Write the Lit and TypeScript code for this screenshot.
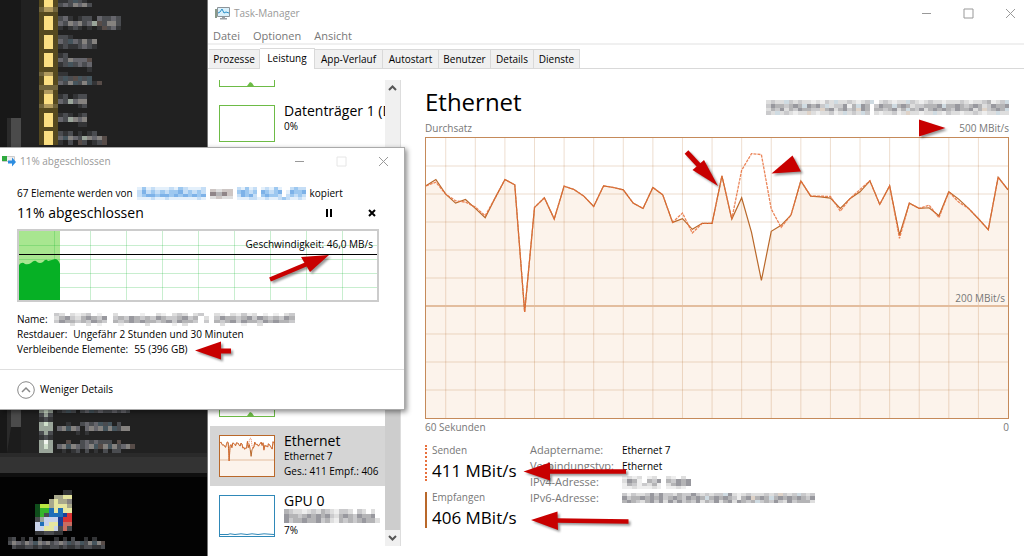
import { LitElement, html, svg, css } from "lit";
import { customElement } from "lit/decorators.js";

const PALETTE: Record<string, string> = {
  a: "#333436", b: "#4a4c50", c: "#66666c", d: "#85827f", e: "#45545c", f: "#574c48",
  y: "#fbdf82", m: "#b09a5e", n: "#55491f", k: "#70643c",
  g: "#9aa59a", h: "#d0e0cc", i: "#f0f4ee",
  A: "#eeeeee", B: "#dedede", C: "#cacacc", D: "#b4b4b6", E: "#98989e", F: "#cfdbe2", G: "#dfd3c8",
  L: "#e4f0fb", M: "#c5def6", N: "#9dc8f0", O: "#7db2e8", P: "#cdc6c4", Q: "#8f8588",
  1: "#0f4d1b", 2: "#35b52a", 3: "#b8e640", 4: "#1f6fb8", 5: "#1b3f96", 6: "#c9d3ea", 7: "#e6e6a0",
  8: "#d83434", 9: "#c86c60", 0: "#a8a88c",
};

function mosaic(rows: string[], width: number, height: number) {
  const cols = Math.max(...rows.map((r) => r.length));
  return html`<svg class="mosaic" aria-hidden="true" width=${width} height=${height}
    viewBox="0 0 ${cols} ${rows.length}" preserveAspectRatio="none" shape-rendering="crispEdges">
    ${rows.flatMap((row, y) => [...row].map((ch, x) => PALETTE[ch]
      ? svg`<rect x=${x} y=${y} width="1" height="1" fill=${PALETTE[ch]}></rect>` : null))}
  </svg>`;
}

const FOLDERS = [
  "nyynaabeba",
  "nyynbcbdcdb",
  "kmmk",
  "nnnn",
  "nyynbca.abb.cbbcb",
  "nyyncbdcdbcgfbddb",
  "nyyna.aba.a.afbca",
  "nnnn",
  "nyynbba",
  "nyyncbecbdbd",
  "nyynabaabcba",
  "nnnn",
  "nyynab",
  "nyyncbdcccf",
  "nyynabebcbc",
  "nnnn......a",
  "kmmnaa",
  "nyynbebfebe",
  "nyyncbdebdeaf",
  "kkkk",
  "nmmn",
  "nyynab.abb",
  "nyyncbgcdd",
  "kmmk....ab",
  "nnnn",
  "nyynaba.ab",
  "nyyncbgdcd",
  "nyyn....aa",
  "nnnn",
  "nyynbab.a.ab",
  "nyyncedcbgdcdf",
  "nyyna.b.fb.abf",
];
const FILES = [
  "ghg.abeb.bcebcbbcbcb",
  "bgb",
  "aba",
  "ghg...a..bcbcebe.b",
  "ggg.cdedc.cdcdedebdd",
  "bgb.....a.a",
  "aba",
  "gig...f..bcbcbbb.f",
  "ghg.cdedcbcdefdedbcdf",
  "ggg..a.ab.b.a.b.bb",
];
const SHORTCUT = [
  "......aa",
  "....0077",
  "...0700d",
  "13307770",
  "12247477",
  "12b44458",
  "bg666588",
  "64677599",
  "66776b9b",
  "aabbaa",
];
const SHORTCUT_LABEL = [
  "ab.a.b.b...a.a.b..a.a",
  "bdcbdcedcdbcdcebcebdedf",
  ".baabbabaabbabaababbaab",
];
const ADAPTER = [
  "BCBBFCBCBBABACBFBBCBABCF.BCBABBFCBABCBBABBBCBABBCDABCF",
  "CEDDCDEDFEDECFBCCEADFED.CEDDFDEDBCCDDDEFDDEDCDEDBCEDDE",
  "BDCEBDCEDDCCGDEBDECDGED.DDCDEBDFDCEBDEDEDCEDDEBDGCDEDF",
  "CBFBCBABBGBABBCABFBCBFC.BABBCABGBBABBFBACBBABBCBABBFBB",
];
const SOURCE = [
  "LNLMLLLMLNMLLLM",
  "MOMNMNMNNOMNMNM",
  "MNOONOONONONONO",
  "LLLMLLMLLLLLLML",
];
const PREPOSITION = ["PBPP", "QDQP", "BPBB"];
const TARGET = [
  "MLNLM.LMLNL..MNMM",
  "NONMN.ONMNO.LONNO",
  "MONOM.NONNM.MNMNM",
  "LLLMMLLMLLMNMLLML",
];
const FILE_NAME = [
  "CB.BABC.A..B....A..BA.BCB.BC..BA.BACAB.A.A.BC",
  "BDECBDEDCE.CDCEDCDCEDCCDECD.B.CEDDCDECEDCDCED",
  "CEDDCDCEDC.DCDEDEDDCDECEDDC.C.DCDECEDDCEDEDDC",
  "...B..B.A...A....B....A.B......B...A..B.......",
];
const IPV4 = ["ABAB.AB..BA.B", "BEDA.DCE.DCEDE", "ADCACBDA.BDEDE", "AABAAABA.AABA"];
const IPV6 = [
  "CACBBCECECCBDCCECBCBCCFEBABCBBBCBCGCBCFCBC",
  "ECDDEDEDECDEDCEDEDFDEDEDCADEGDEDFDEDEDEDCE",
  "DEDCBDECEBECECDCEBDCEBDEBEDCDFCDCECBECDDDB",
];
const GPU_NAME = ["DCBBABCBDCBACCB.CB.B", "EDDCDEDEDECBDEDCEDDE", "ECDDEDDECDBADCDCDEDDB"];

/* Throughput samples, measured downwards from the top of a 590 × 843 plot. */
const RECEIVE = [144, 125, 169, 196, 185, 212, 240, 181, 125, 141, 524, 209, 180, 244, 145, 155, 175, 206,
  144, 149, 156, 196, 212, 149, 171, 254, 243, 275, 257, 257, 114, 244, 180, 284, 429, 281, 263, 232, 129,
  175, 177, 181, 212, 182, 162, 129, 200, 144, 292, 196, 212, 210, 234, 162, 184, 212, 243, 276, 118, 156];
const SEND = RECEIVE.slice();
Object.entries({ 1: 133, 3: 189, 4: 193, 5: 208, 6: 234, 26: 226, 27: 286, 32: 97, 33: 47, 34: 50, 35: 214,
  36: 269, 40: 175, 41: 176, 42: 220, 44: 155, 48: 302, 51: 202, 52: 240, 54: 193 })
  .forEach(([i, v]) => (SEND[+i] = v));
const points = (d: number[]) => d.map((v, i) => `${i * 10},${v}`).join(" ");
const range = (n: number) => Array.from({ length: n }, (_, i) => i);

function throughput(mini = false) {
  return html`<svg class="plot" viewBox="0 0 590 843" preserveAspectRatio="none" aria-hidden="true">
    <polygon points="0,843 ${points(RECEIVE)} 590,843" fill="#fcf3eb"></polygon>
    ${mini ? null : svg`<g stroke="#a74f01" stroke-opacity=".19">
      ${range(19).map((i) => svg`<line x1=${20 + i * 30} x2=${20 + i * 30} y1="0" y2="843" vector-effect="non-scaling-stroke"></line>`)}
      ${range(9).map((i) => svg`<line x1="0" x2="590" y1=${(i + 1) * 84.3} y2=${(i + 1) * 84.3} vector-effect="non-scaling-stroke"></line>`)}
    </g>`}
    <line x1="0" x2="590" y1="506" y2="506" stroke="#e3bd9e" stroke-width=${mini ? 1 : 2} vector-effect="non-scaling-stroke"></line>
    <polyline points=${points(RECEIVE)} fill="none" stroke="#b9682a" stroke-width=${mini ? 1 : 1.2} vector-effect="non-scaling-stroke"></polyline>
    <polyline points=${points(SEND)} fill="none" stroke="#e8703c" stroke-opacity=".85" stroke-width=${mini ? 1 : 1.3} stroke-dasharray=${mini ? "1 1" : "3 1"} vector-effect="non-scaling-stroke"></polyline>
  </svg>`;
}

const winControls = () => html`
  <div class="controls">
    <button aria-label="Minimieren"><svg width="11" height="11" viewBox="0 0 11 11"><path d="M1 5.500h9" /></svg></button>
    <button class="max" aria-label="Maximieren"><svg width="11" height="11" viewBox="0 0 11 11"><path d="M1 1h9v9h-9z" /></svg></button>
    <button aria-label="Schließen"><svg width="11" height="11" viewBox="0 0 11 11"><path d="M1 1l9 9M10 1l-9 9" /></svg></button>
  </div>`;

const base = css`
  * { box-sizing: border-box; }
  button { font: inherit; color: inherit; border: 0; background: none; padding: 0; margin: 0; text-align: left; }
  svg { display: block; flex: none; }
  .controls { display: flex; margin-left: auto; }
  .controls button { width: 42px; height: 26px; display: flex; align-items: center; justify-content: center; }
  .controls path { fill: none; stroke: #999; }
`;

@customElement("desktop-side")
class DesktopSide extends LitElement {
  static styles = [base, css`
    :host { display: grid; grid-template-rows: 1fr 24px 79px; background: #030303; overflow: hidden; }
    .explorer { display: flex; background: #212121; min-height: 0; }
    .nav { width: 21px; background: #181818; display: flex; flex-direction: column; justify-content: space-between; align-items: flex-end; padding-top: 118px; }
    .nav i { width: 14px; height: 30px; background: #4b4b4b; border-left: 4px solid #2b2b2b; }
    .nav .low { height: 44px; border-bottom: 26px solid #1c1c1c; }
    .list { display: flex; flex-direction: column; justify-content: space-between; padding-left: 18px; margin-top: -2px; }
    .band { background: #333; border-top: 4px solid #2a2a2a; border-bottom: 4px solid #0f0f0f; }
    .desk { display: flex; flex-direction: column; padding: 13px 0 0 8px; gap: 2px; }
    .icon { padding-left: 27px; }
  `];
  render() {
    return html`
      <div class="explorer">
        <div class="nav"><i></i><i class="low"></i></div>
        <div class="list">${mosaic(FOLDERS, 82, 147)}${mosaic(FILES, 96, 45)}</div>
      </div>
      <div class="band"></div>
      <div class="desk"><div class="icon">${mosaic(SHORTCUT, 37, 45)}</div>${mosaic(SHORTCUT_LABEL, 97, 12)}</div>`;
  }
}

@customElement("task-manager")
class TaskManager extends LitElement {
  static styles = [base, css`
    :host { display: flex; flex-direction: column; background: #fff; color: #000; font-size: 11px; line-height: 16px; min-width: 0; min-height: 0; border-left: 1px solid #777; overflow: hidden; }
    .title { display: flex; align-items: center; height: 26px; padding-left: 6px; gap: 4px; color: #999; font-size: 10px; }
    .title .controls { margin-right: -7px; }
    .menu { display: flex; gap: 13px; height: 19px; align-items: center; padding: 2px 0 0 5px; color: #777; border-bottom: 2px solid #f0f0f0; }
    .tabs { display: grid; grid-template-columns: 51px 55px 68px 56px 52px 43px 46px; align-items: end; padding: 3px 0 0 1px; border-bottom: 1px solid #d9d9d9; height: 24px; font-size: 10px; font-weight: 500; }
    .tabs button { height: 19px; background: #f0f0f0; border: 1px solid #d9d9d9; border-width: 1px 1px 0 0; text-align: center; white-space: nowrap; }
    .tabs .on { background: #fff; height: 21px; margin-bottom: -1px; padding-bottom: 3px; }
    .body { flex: 1; display: flex; min-height: 0; padding-top: 11px; }
    .side { display: flex; width: 193px; padding-left: 2px; margin-bottom: 10px; border-right: 1px solid #ddd; }
    .list { flex: 1; display: flex; flex-direction: column; justify-content: flex-end; overflow: hidden; min-width: 0; }
    .item { flex: none; height: 55px; padding: 9px 0 9px 9px; display: flex; gap: 9px; white-space: nowrap; overflow: hidden; font-size: 10px; }
    .item.tall { height: 60px; }
    .item.on { background: #d5d5d5; }
    .thumb { width: 56px; flex: none; align-self: stretch; border: 1px solid #6dbb46; background: #fff; display: flex; align-items: flex-end; }
    .item.eth .thumb { border-color: #b9682a; }
    .item.gpu .thumb { border-color: #2f88b8; }
    .thumb svg { width: 100%; height: 100%; }
    .item b { display: block; font-weight: 400; font-size: 14px; line-height: 16px; margin-top: -2px; }
    .item span { display: block; line-height: 15px; }
    .bar { width: 15px; background: #f0f0f0; display: flex; flex-direction: column; align-items: center; }
    .bar svg { margin: 4px 0; }
    .knob { flex: 1; width: 15px; background: linear-gradient(#f0f0f0 35%, #cdcdcd 35%); }
    .main { flex: 1; display: flex; flex-direction: column; min-width: 0; padding: 7px 15px 26px 24px; color: #777; }
    .head { display: flex; justify-content: space-between; align-items: center; height: 33px; }
    h1 { font-size: 24px; line-height: 30px; font-weight: 400; color: #000; margin: 0; padding-bottom: 3px; }
    .head svg { margin-top: 8px; }
    .scale { display: flex; justify-content: space-between; line-height: 16px; font-size: 10px; }
    .chart { flex: 1; min-height: 0; border: 1px solid #c58a5a; margin-top: 1px; position: relative; display: flex; }
    .plot { width: 100%; height: 100%; }
    .mid { position: absolute; right: 3px; bottom: 40%; font-size: 10px; line-height: 16px; }
    .stats { display: flex; margin-top: 10px; height: 85px; }
    .rates { width: 105px; display: flex; flex-direction: column; gap: 11px; }
    .rate { height: 36px; border-left: 2px dotted #e8703c; padding-left: 5px; white-space: nowrap; }
    .rate.in { border-left: 2px solid #b9682a; }
    .rate span { display: block; line-height: 10px; font-size: 10px; }
    .rate strong { display: block; font-weight: 400; font-size: 17px; line-height: 32px; color: #000; }
    dl { margin: -3px 0 0; display: grid; grid-template-columns: 92px auto; grid-auto-rows: 16px; align-content: start; align-items: center; white-space: nowrap; }
    dd { margin: 0; color: #000; font-size: 10px; }
  `];
  render() {
    const tabs = ["Prozesse", "Leistung", "App-Verlauf", "Autostart", "Benutzer", "Details", "Dienste"];
    const bump = html`<svg viewBox="0 0 54 35"><path d="M27 35l3-4 2 1 2 3z" fill="#6dbb46" /></svg>`;
    return html`
      <header class="title">
        <svg width="16" height="14" viewBox="0 0 16 14"><path d="M1 3h2v9h-2z" fill="#8a9a8a" /><path d="M3.500 1.500h12v9h-12z" fill="#d9f0fb" stroke="#8d9499" /><path d="M4 7l2-1 2-3 2 4 2-1 3 1" fill="none" stroke="#2b90c8" /><path d="M8 11h3v1h2v1.500h-7v-1.500h2z" fill="#9aa0a4" /></svg>
        <span>Task-Manager</span>${winControls()}
      </header>
      <nav class="menu"><button>Datei</button><button>Optionen</button><button>Ansicht</button></nav>
      <div class="tabs" role="tablist">${tabs.map((t) => html`<button role="tab" class=${t === "Leistung" ? "on" : ""} aria-selected=${t === "Leistung"}>${t}</button>`)}</div>
      <div class="body">
        <div class="side">
          <div class="list">
            <button class="item" aria-label="Datenträger 0"><div class="thumb">${bump}</div></button>
            <button class="item"><div class="thumb"></div><div><b>Datenträger 1 (D:)</b><span>0%</span></div></button>
            ${range(4).map(() => html`<div class="item"><div class="thumb"></div></div>`)}
            <div class="item"><div class="thumb">${bump}</div></div>
            <button class="item tall eth on"><div class="thumb">${throughput(true)}</div><div><b>Ethernet</b><span>Ethernet 7</span><span>Ges.: 411 Empf.: 406</span></div></button>
            <button class="item tall gpu"><div class="thumb"><svg viewBox="0 0 54 40"><path d="M0 38.500h8l2-.7 5 .7 6-.7 6 .7 5-.7 6 .7 6-.7 10 .7" fill="none" stroke="#2f88b8" /></svg></div><div><b>GPU 0</b>${mosaic(GPU_NAME, 96, 14)}<span>7%</span></div></button>
          </div>
          <div class="bar">
            <svg width="9" height="8" viewBox="0 0 9 8"><path d="M1 6l3.500-3.500L8 6" fill="none" stroke="#555" stroke-width="2" /></svg>
            <div class="knob"></div>
            <svg width="9" height="8" viewBox="0 0 9 8"><path d="M1 2l3.500 3.500L8 2" fill="none" stroke="#555" stroke-width="2" /></svg>
          </div>
        </div>
        <main class="main">
          <div class="head"><h1>Ethernet</h1>${mosaic(ADAPTER, 243, 15)}</div>
          <div class="scale"><span>Durchsatz</span><span>500 MBit/s</span></div>
          <div class="chart">${throughput()}<span class="mid">200 MBit/s</span></div>
          <div class="scale"><span>60 Sekunden</span><span>0</span></div>
          <div class="stats">
            <div class="rates">
              <div class="rate"><span>Senden</span><strong>411 MBit/s</strong></div>
              <div class="rate in"><span>Empfangen</span><strong>406 MBit/s</strong></div>
            </div>
            <dl>
              <dt>Adaptername:</dt><dd>Ethernet 7</dd>
              <dt>Verbindungstyp:</dt><dd>Ethernet</dd>
              <dt>IPv4-Adresse:</dt><dd>${mosaic(IPV4, 69, 13)}</dd>
              <dt>IPv6-Adresse:</dt><dd>${mosaic(IPV6, 193, 10)}</dd>
            </dl>
          </div>
        </main>
      </div>`;
  }
}

@customElement("copy-dialog")
class CopyDialog extends LitElement {
  static styles = [base, css`
    :host { display: flex; flex-direction: column; background: #fff; color: #000; border: 1px solid #aaa; border-left: 0; font-size: 10px; line-height: 15px; box-shadow: 2px 2px 5px rgba(0,0,0,.45); }
    .title { display: flex; align-items: center; height: 26px; padding-left: 2px; gap: 4px; color: #999; }
    .controls .max path { stroke: #e6e6e6; }
    .content { padding: 12px 25px 0 17px; }
    .line { display: flex; align-items: center; white-space: nowrap; }
    .sentence { gap: 4px; }
    .progress { font-size: 14px; line-height: 20px; margin: 2px 0 6px; }
    .progress button { margin-left: auto; }
    .progress button + button { margin-left: 35px; margin-right: 3px; }
    .graph { height: 73px; border: 2px solid #ccc; position: relative; display: flex; margin-bottom: 10px; }
    .graph svg { width: 100%; height: 100%; }
    .speed { position: absolute; right: 4px; top: 6px; }
    .gap { gap: 6px; }
    .foot { border-top: 1px solid #dfdfdf; margin-top: 12px; flex: 1; display: flex; align-items: center; padding: 0 17px; }
    .foot button { display: flex; align-items: center; gap: 5px; }
  `];
  render() {
    const top = "M0 70V34q3-4 6-1q3 1 6-1q4-4 6-1q3 2 6 0q3-4 5-1q4-1 7-2q3 0 5 5V70z";
    return html`
      <header class="title">
        <svg width="14" height="12" viewBox="0 0 14 12"><path d="M.5 1.500h12v5h-12z" fill="#eee" stroke="#ccc" /><path d="M0 1h5v5h-5z" fill="#2faa3f" /><path d="M6 5.500h4v-3l4 4.500-4 4.500v-3h-4z" fill="#2d8de0" /></svg>
        <span>11% abgeschlossen</span>${winControls()}
      </header>
      <div class="content">
        <div class="line sentence"><span>67 Elemente werden von</span>${mosaic(SOURCE, 69, 13)}${mosaic(PREPOSITION, 23, 10)}${mosaic(TARGET, 69, 13)}<span>kopiert</span></div>
        <div class="line progress"><span>11% abgeschlossen</span>
          <button aria-label="Anhalten"><svg width="8" height="8" viewBox="0 0 8 8"><path d="M1 0h2v8h-2zM5 0h2v8h-2z" /></svg></button>
          <button aria-label="Abbrechen"><svg width="8" height="8" viewBox="0 0 8 8"><path d="M1 1l6 6M7 1l-6 6" stroke="#000" stroke-width="2" /></svg></button>
        </div>
        <div class="graph">
          <svg viewBox="0 0 358 69" preserveAspectRatio="none" aria-hidden="true">
            <rect width="41" height="70" fill="#a8e690"></rect>
            <g stroke="#06b025" stroke-opacity=".22">
              ${range(9).map((i) => svg`<line x1=${35.5 + i * 36} x2=${35.5 + i * 36} y1="0" y2="69"></line>`)}
              ${range(4).map((i) => svg`<line x1="0" x2="358" y1=${14.5 + i * 14} y2=${14.5 + i * 14}></line>`)}
            </g>
            <path d=${top} fill="#06b025"></path>
            <path d="M0 23.500h358" stroke="#000"></path>
          </svg>
          <span class="speed">Geschwindigkeit: 46,0 MB/s</span>
        </div>
        <div class="line gap"><span>Name:</span>${mosaic(FILE_NAME, 246, 13)}</div>
        <div class="line gap"><span>Restdauer:</span><span>Ungefähr 2 Stunden und 30 Minuten</span></div>
        <div class="line gap"><span>Verbleibende Elemente:</span><span>55 (396 GB)</span></div>
      </div>
      <footer class="foot"><button>
        <svg width="18" height="18" viewBox="0 0 18 18" fill="none" stroke="#888"><circle cx="9" cy="9" r="8.300" /><path d="M5 11l4-4 4 4" stroke-width="1.500" /></svg>
        <span>Weniger Details</span></button></footer>`;
  }
}

@customElement("app-root")
class AppRoot extends LitElement {
  static styles = [base, css`
    :host { display: grid; grid-template-columns: 207px minmax(0, 1fr); height: 100vh; position: relative; overflow: hidden; background: #000; font-family: "Open Sans", "Noto Sans", sans-serif; }
    copy-dialog { position: absolute; left: 0; top: 147px; width: 405px; height: 263px; }
    .marks { position: absolute; left: 0; top: 0; pointer-events: none; filter: drop-shadow(2px 2px 1px rgba(0,0,0,.4)); }
  `];
  render() {
    return html`
      <desktop-side></desktop-side>
      <task-manager></task-manager>
      <copy-dialog></copy-dialog>
      <svg class="marks" width="1024" height="556" viewBox="0 0 1024 556" fill="#c80000" stroke="#c80000" stroke-width="0" aria-hidden="true">
        <path d="M329 255l-28 2 9 15z" /><path d="M270 279.500L307 264" stroke-width="4.500" />
        <path d="M195 350.500l26-9v18z" /><path d="M220 351h11" stroke-width="5" />
        <path d="M718 186l-25.500-16L704 160z" /><path d="M686.500 152l13 14" stroke-width="5" />
        <path d="M771.500 173.500l21-18 8.500 16z" />
        <path d="M919 119.500v17l26.500-8.500z" />
        <path d="M523.500 471.500l26.500-9v18z" /><path d="M549 471.500h77" stroke-width="4.500" />
        <path d="M531 520l26.500-8.500.5 18.500z" /><path d="M556 520.500l72.500 1" stroke-width="4.500" />
      </svg>`;
  }
}
